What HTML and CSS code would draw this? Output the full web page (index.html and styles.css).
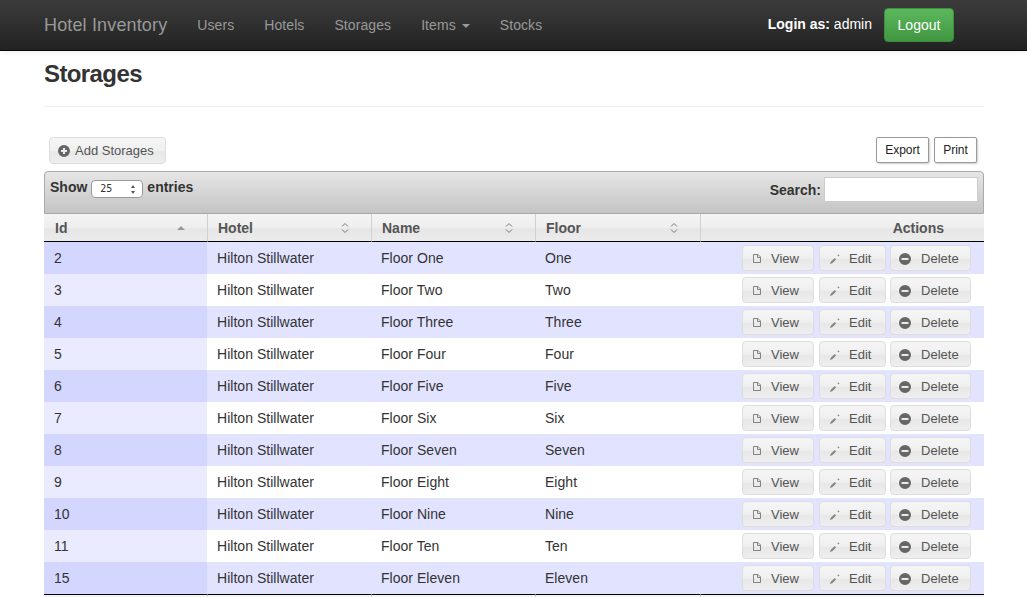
FILE: index.html
```html
<!DOCTYPE html>
<html lang="en">
<head>
    <meta charset="UTF-8">
    <title>Storages</title>
    <link rel="stylesheet" href="styles.css">
</head>
<body>
    <svg class="defs" width="0" height="0">
      <symbol id="iconPlus" viewBox="0 0 12 12"><path fill-rule="evenodd" d="M6 0a6 6 0 1 0 0 12A6 6 0 0 0 6 0zM5 3h2v2h2v2H7v2H5V7H3V5h2z"/></symbol>
      <symbol id="iconMinus" viewBox="0 0 12 12"><path fill-rule="evenodd" d="M6 0a6 6 0 1 0 0 12A6 6 0 0 0 6 0zM2.500 5h7v2h-7z"/></symbol>
      <symbol id="iconFile" viewBox="0 0 8 9"><path fill="none" stroke="currentColor" stroke-width="0.9" d="M0.500 0.500h4.500l2.500 2.500v5.500h-7zM4.500 0.500v3h3"/></symbol>
      <symbol id="iconPencil" viewBox="0 0 10 10"><path d="M0 10l.7-2.300 4-3.700 1.400 1.400-3.800 3.900zM8.500 0l.4 1 1.100.4-1.100.4-.4 1-.4-1-1.100-.4 1.100-.4z"/></symbol>
    </svg>

    <nav class="navbar">
      <div class="navLeft">
        <a class="brand">Hotel Inventory</a>
        <a class="navLink">Users</a>
        <a class="navLink">Hotels</a>
        <a class="navLink">Storages</a>
        <a class="navLink">Items <span class="caret"></span></a>
        <a class="navLink">Stocks</a>
      </div>
      <div class="navRight">
        <span class="loginAs"><b>Login as:</b> admin</span>
        <a class="logoutBtn">Logout</a>
      </div>
    </nav>

    <main class="container">
      <h1 class="pageTitle">Storages</h1>
      <hr class="divider">

      <div class="toolRow">
        <a class="btn addBtn"><svg class="icon iconBig"><use href="#iconPlus"/></svg>Add Storages</a>
        <div class="tools">
          <a class="toolBtn exportBtn">Export</a>
          <a class="toolBtn">Print</a>
        </div>
      </div>

      <div class="tableHead">
        <label class="lengthBox"><b>Show</b>
          <span class="fakeSelect">25<svg class="selArrows" viewBox="0 0 6 9"><path d="M3 0l2 3H1zM3 9L1 6h4z"/></svg></span>
          <b>entries</b></label>
        <label class="searchBox"><b>Search:</b> <input type="text" class="searchInput"></label>
      </div>

      <table class="dataTable">
        <thead>
          <tr>
            <th class="colId">Id<svg class="sortIcon" viewBox="0 0 8 10"><path d="M4 3l4 4H0z"/></svg></th>
            <th class="colHotel">Hotel<svg class="sortIcon" viewBox="0 0 8 12"><path fill="none" stroke="currentColor" d="M1 4.500l3-3 3 3M1 7.500l3 3 3-3"/></svg></th>
            <th class="colName">Name<svg class="sortIcon" viewBox="0 0 8 12"><path fill="none" stroke="currentColor" d="M1 4.500l3-3 3 3M1 7.500l3 3 3-3"/></svg></th>
            <th class="colFloor">Floor<svg class="sortIcon" viewBox="0 0 8 12"><path fill="none" stroke="currentColor" d="M1 4.500l3-3 3 3M1 7.500l3 3 3-3"/></svg></th>
            <th class="colActions">Actions</th>
          </tr>
        </thead>
        <tbody id="rows"></tbody>
        <tfoot>
          <tr>
            <th></th><th></th><th></th><th></th><th></th>
          </tr>
        </tfoot>
      </table>
    </main>

    <script>
        const storages = [
            [2, 'One'], [3, 'Two'], [4, 'Three'], [5, 'Four'], [6, 'Five'], [7, 'Six'],
            [8, 'Seven'], [9, 'Eight'], [10, 'Nine'], [11, 'Ten'], [15, 'Eleven']
        ];

        const actionBtn = (cls, icon, label) =>
            `<a class="btn ${cls}"><svg class="icon ${icon.cls}"><use href="#${icon.id}"/></svg>${label}</a>`;

        document.getElementById('rows').innerHTML = storages.map(([id, floor]) => `
          <tr>
            <td class="idCell">${id}</td>
            <td>Hilton Stillwater</td>
            <td>Floor ${floor}</td>
            <td>${floor}</td>
            <td class="actionCell">
              ${actionBtn('viewBtn', {id: 'iconFile', cls: 'iconFile'}, 'View')}
              ${actionBtn('editBtn', {id: 'iconPencil', cls: 'iconPencil'}, 'Edit')}
              ${actionBtn('deleteBtn', {id: 'iconMinus', cls: 'iconBig'}, 'Delete')}
            </td>
          </tr>`).join('');
    </script>
</body>
</html>
```

FILE: styles.css
```css
* {
    box-sizing: border-box;
}
html {
    height: 100%;
    overflow: hidden;
}
body {
    margin: 0;
    font-family: "Liberation Sans", Arial, sans-serif;
    font-size: 14px;
    line-height: 20px;
    color: #333;
    background-color: #fff;
}
.defs {
    display: block;
    height: 0;
}
.navbar {
    display: flex;
    justify-content: space-between;
    height: 51px;
    padding: 0 73px 0 44px;
    background: linear-gradient(to bottom, #3c3c3c 0, #222 100%);
    border-bottom: 1px solid #080808;
    box-shadow: 0 1px 6px rgba(0, 0, 0, 0.08);
}
.navLeft, .navRight {
    display: flex;
    align-items: center;
}
.brand {
    margin-right: 30px;
    font-size: 18px;
    letter-spacing: 0.15px;
    color: #999;
}
.navLink {
    margin-right: 30px;
    letter-spacing: 0.08px;
    color: #999;
}
.caret {
    display: inline-block;
    margin-left: 2px;
    vertical-align: middle;
    border-top: 4px solid #999;
    border-left: 4px solid transparent;
    border-right: 4px solid transparent;
}
.loginAs {
    margin-right: 12px;
    padding-bottom: 2px;
    color: #fff;
}
.logoutBtn {
    display: block;
    width: 70px;
    height: 34px;
    margin-bottom: 1px;
    line-height: 32px;
    text-align: center;
    color: #fff;
    background: linear-gradient(to bottom, #5cb85c 0, #419641 100%);
    border: 1px solid #3e8f3e;
    border-radius: 4px;
}
.container {
    width: 940px;
    margin-left: 44px;
}
.pageTitle {
    margin: 0;
    padding-top: 7px;
    font-size: 24px;
    line-height: 32px;
    font-weight: bold;
    letter-spacing: -0.6px;
    color: #333;
}
.divider {
    height: 1px;
    margin: 16px 0 30px;
    border: 0;
    background-color: #eee;
}
.toolRow {
    display: flex;
    justify-content: space-between;
    height: 34px;
    padding: 0 7px 0 5px;
}
.tools {
    display: flex;
    gap: 5px;
}
.toolBtn {
    display: block;
    width: 43px;
    height: 26px;
    font-size: 12px;
    line-height: 24px;
    text-align: center;
    color: #222;
    background-color: #fff;
    border: 1px solid #999;
    border-radius: 2px;
    box-shadow: 1px 1px 2px rgba(0, 0, 0, 0.2);
}
.exportBtn {
    width: 53px;
}
.btn {
    display: inline-flex;
    align-items: center;
    height: 26px;
    font-size: 13px;
    color: #555;
    background: linear-gradient(to bottom, #f5f5f5 0, #f0f0f0 50%, #e8e8e8 55%, #eeeeee 100%);
    border: 1px solid #ddd;
    border-radius: 4px;
    white-space: nowrap;
}
.addBtn {
    width: 117px;
    height: 27px;
    padding-left: 8px;
}
.icon {
    flex: none;
    fill: #666;
    color: #777;
}
.iconBig {
    width: 12px;
    height: 12px;
    margin-right: 5px;
}
.iconFile {
    width: 8px;
    height: 9px;
    margin-right: 10px;
}
.iconPencil {
    width: 10px;
    height: 10px;
    margin-right: 9px;
    fill: #888;
}
.tableHead {
    display: flex;
    justify-content: space-between;
    height: 43px;
    padding: 5px 5px 0 5px;
    background: linear-gradient(to bottom, #e6e6e6 0, #c4c4c4 100%);
    border: 1px solid #aaa;
    border-radius: 4px 4px 0 0;
}
.tableHead b {
    color: #333;
}
.lengthBox {
    display: flex;
    align-items: flex-start;
    gap: 4px;
}
.fakeSelect {
    display: flex;
    justify-content: space-between;
    align-items: center;
    width: 52px;
    height: 18px;
    margin-top: 3px;
    padding: 0 6px 0 8px;
    font-family: "DejaVu Sans Mono", monospace;
    font-size: 10px;
    background-color: #fff;
    border: 1px solid #999;
    border-radius: 4px;
}
.selArrows {
    width: 6px;
    height: 9px;
    fill: #555;
}
.searchBox {
    display: flex;
    align-items: flex-start;
    gap: 3px;
    padding-top: 3px;
}
.searchInput {
    width: 154px;
    height: 25px;
    margin-top: -3px;
    background-color: #fff;
    border: 1px solid #ccc;
    outline: none;
}
.dataTable {
    width: 940px;
    table-layout: fixed;
    border-collapse: separate;
    border-spacing: 0;
}
.dataTable th {
    position: relative;
    height: 28px;
    padding: 0 10px;
    text-align: left;
    font-weight: bold;
    color: #555;
    background: linear-gradient(to bottom, #f4f4f4 0, #eee 50%, #e6e6e6 55%, #ececec 100%);
    border-left: 1px solid #d0d0d0;
}
.dataTable th:first-child {
    padding-left: 11px;
    border-left: 0;
}
.dataTable thead th {
    border-bottom: 1px solid #000;
}
.dataTable tfoot th {
    border-top: 1px solid #000;
}
.colId { width: 163px; }
.colHotel { width: 164px; }
.colName { width: 164px; }
.colFloor { width: 165px; }
.dataTable .colActions {
    padding: 0 40px 0 0;
    text-align: right;
}
.sortIcon {
    position: absolute;
    top: 8px;
    right: 22px;
    width: 8px;
    height: 12px;
    fill: #999;
    color: #777;
}
.dataTable td {
    height: 32px;
    padding: 0 10px;
    letter-spacing: 0.03px;
    color: #333;
    background-color: #fff;
}
.dataTable .idCell {
    background-color: #eaebff;
}
.dataTable tbody tr:nth-child(odd) td {
    background-color: #e2e4ff;
}
.dataTable tbody tr:nth-child(odd) .idCell {
    background-color: #d3d6ff;
}
.dataTable .actionCell {
    padding: 0 13px 0 0;
    text-align: right;
    font-size: 0;
}
.actionCell .btn {
    height: 26px;
    justify-content: flex-start;
    margin-left: 5px;
    padding-top: 1px;
    vertical-align: middle;
}
.viewBtn {
    width: 72px;
    padding-left: 10px;
}
.editBtn {
    width: 67px;
    padding-left: 10px;
}
.actionCell .deleteBtn {
    width: 81px;
    margin-left: 4px;
    padding-left: 8px;
}
.deleteBtn .iconBig {
    margin-right: 10px;
}
```
